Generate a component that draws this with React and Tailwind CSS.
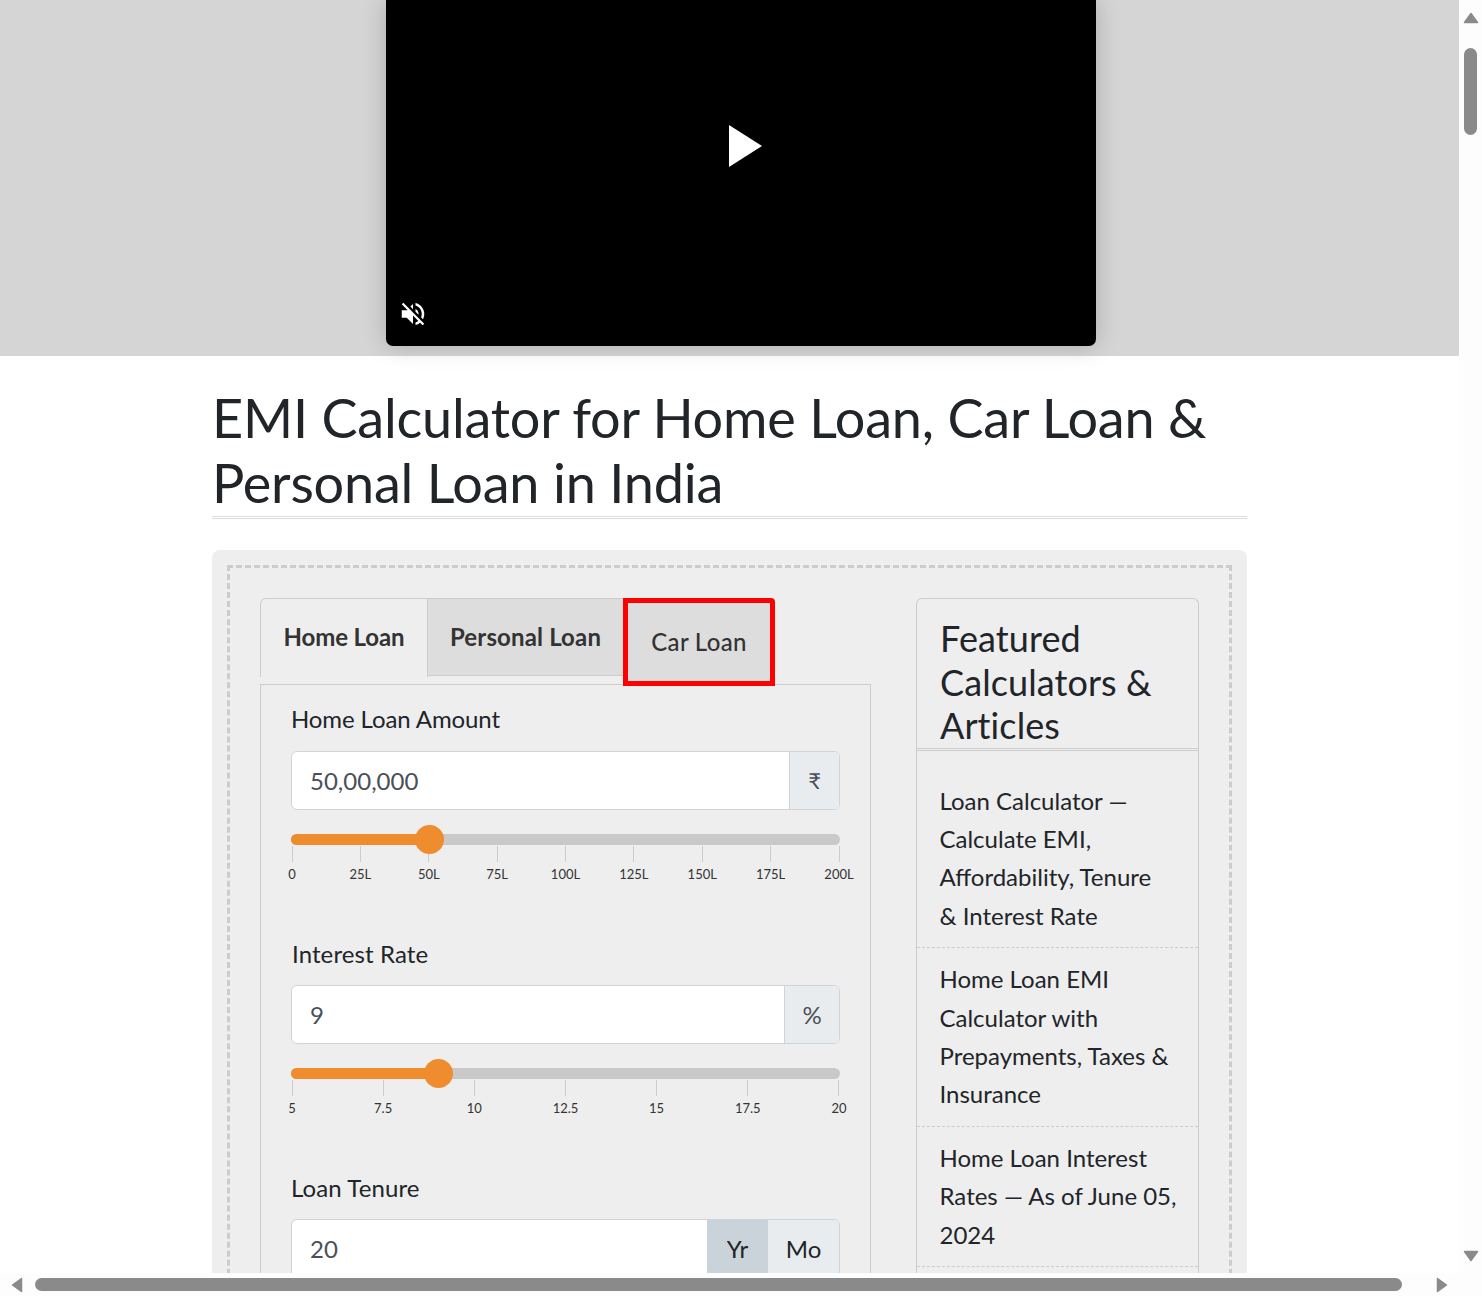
const Ticks = ({ labels }) => (
  <div className="mt-px flex justify-between px-px">
    {labels.map((l) => (
      <div key={l} className="flex w-0 flex-col items-center">
        <div className="h-[16px] w-px shrink-0 bg-[#ccc]" />
        <div className="mt-[2px] whitespace-nowrap text-[13px] leading-[20px] text-[#333]">{l}</div>
      </div>
    ))}
  </div>
);

const Slider = ({ pct, labels }) => (
  <div>
    <div className="relative h-[11px] rounded-full bg-[#c9c9c9]">
      <div className="h-full rounded-full bg-[#ee8c2e]" style={{ width: `${pct}%` }} />
      <div
        className="absolute top-[-9px] ml-[-15px] h-[29px] w-[29px] rounded-full bg-[#ee8c2e]"
        style={{ left: `${pct}%` }}
      />
    </div>
    <Ticks labels={labels} />
  </div>
);

const Field = ({ label, labelClass, value, children }) => (
  <div>
    <div className={`text-[24px] leading-[36px] text-[#212529] ${labelClass}`}>{label}</div>
    <div className="mt-[13px] flex h-[59px] overflow-hidden rounded-[6px] border border-[#ced4da] bg-white">
      <div className="flex flex-1 items-center pl-[18px] text-[24px] text-[#495057]">{value}</div>
      {children}
    </div>
  </div>
);

const ArrowV = ({ points, className }) => (
  <svg viewBox="0 0 16 12" className={`h-[12px] w-[16px] shrink-0 ${className}`}>
    <polygon points={points} fill="#8a8a8a" stroke="#8a8a8a" strokeWidth="1.5" strokeLinejoin="round" />
  </svg>
);

const ArrowH = ({ points, className }) => (
  <svg viewBox="0 0 12 16" className={`h-[16px] w-[12px] shrink-0 ${className}`}>
    <polygon points={points} fill="#8a8a8a" stroke="#8a8a8a" strokeWidth="1.5" strokeLinejoin="round" />
  </svg>
);

const articles = [
  ["Loan Calculator —", "Calculate EMI,", "Affordability, Tenure", "& Interest Rate"],
  ["Home Loan EMI", "Calculator with", "Prepayments, Taxes &", "Insurance"],
  ["Home Loan Interest", "Rates — As of June 05,", "2024"],
];

export default function App() {
  return (
    <div className="h-[1296px] w-[1482px] overflow-hidden bg-white font-['Lato',sans-serif] text-[#212529]">
      <div className="flex h-[1273px]">
        <div className="h-full w-[1459px] overflow-hidden">
          {/* video */}
          <div className="h-[356px] bg-[#d5d5d5] pb-[10px]">
            <div className="relative ml-[386px] h-[346px] w-[710px] rounded-b-[7px] bg-black shadow-[0_0_24px_rgba(0,0,0,0.2)]">
              <svg viewBox="0 0 33 42" className="absolute left-[343px] top-[125px] h-[42px] w-[33px]">
                <polygon points="0,0 33,21 0,42" fill="white" />
              </svg>
              <svg viewBox="0 0 24 24" className="absolute left-[12px] top-[299px] h-[30px] w-[30px]" fill="white">
                <path d="M16.5 12c0-1.77-1.02-3.29-2.5-4.03v2.21l2.45 2.45c.03-.2.05-.41.05-.63zm2.5 0c0 .94-.2 1.82-.54 2.64l1.51 1.51C20.63 14.91 21 13.5 21 12c0-4.28-2.99-7.86-7-8.77v2.06c2.89.86 5 3.54 5 6.71zM4.27 3L3 4.27 7.73 9H3v6h4l5 5v-6.73l4.25 4.25c-.67.52-1.42.93-2.25 1.18v2.06c1.38-.31 2.63-.95 3.69-1.81L19.73 21 21 19.73l-9-9L4.27 3zM12 4L9.91 6.09 12 8.18V4z" />
              </svg>
            </div>
          </div>

          <div className="ml-[212px] w-[1035px]">
            <h1 className="mt-[29px] border-b-[3px] border-double border-[#ddd] pb-[1px] text-[54px] leading-[65px] tracking-[-0.2px]">
              EMI Calculator for Home Loan, Car Loan &amp; Personal Loan in India
            </h1>

            <div className="mt-[31px] rounded-[8px] bg-[#eee] p-[15px]">
              <div className="flex h-[800px] gap-[45px] border-[3px] border-dashed border-[#ccc] px-[30px] pt-[30px]">
                {/* calculator */}
                <div className="w-[611px]">
                  <div className="flex h-[86px] items-start">
                    <div className="flex h-[79px] w-[168px] items-center justify-center rounded-tl-[6px] border-l border-r border-t border-[#ccc] pb-[2px] text-[24px] font-bold tracking-[-0.1px] text-[#333]">
                      Home Loan
                    </div>
                    <div className="flex h-[78px] w-[195px] items-center justify-center border-b border-t border-[#ccc] bg-[#ddd] text-[24px] font-bold tracking-[0.15px] text-[#333]">
                      Personal Loan
                    </div>
                    <div className="flex h-[88px] w-[152px] items-center justify-center rounded-tr-[4px] border-[5px] border-[#f00] bg-[#ddd] text-[24px] font-medium tracking-[0.3px] text-[#333]">
                      Car Loan
                    </div>
                  </div>
                  <div className="h-[600px] border-l border-r border-t border-[#ccc] px-[30px] pt-[16px]">
                    <Field label="Home Loan Amount" labelClass="pb-px tracking-[-0.1px]" value="50,00,000">
                      <div className="flex w-[50px] items-center justify-center border-l border-[#ced4da] bg-[#e9ecef] text-[22px] text-[#495057]">₹</div>
                    </Field>
                    <div className="mt-[24px]">
                      <Slider pct={25.3} labels={["0", "25L", "50L", "75L", "100L", "125L", "150L", "175L", "200L"]} />
                    </div>
                    <div className="mt-[52px]">
                      <Field label="Interest Rate" labelClass="pl-px tracking-[0.1px]" value="9">
                        <div className="flex w-[55px] items-center justify-center border-l border-[#ced4da] bg-[#e9ecef] text-[24px] text-[#495057]">%</div>
                      </Field>
                    </div>
                    <div className="mt-[24px]">
                      <Slider pct={26.9} labels={["5", "7.5", "10", "12.5", "15", "17.5", "20"]} />
                    </div>
                    <div className="mt-[52px]">
                      <Field label="Loan Tenure" labelClass="tracking-[0.1px]" value="20">
                        <div className="flex w-[61px] items-center justify-center bg-[#cbd3da] text-[24px]">Yr</div>
                        <div className="flex w-[71px] items-center justify-center bg-[#e9ecef] text-[24px]">Mo</div>
                      </Field>
                    </div>
                  </div>
                </div>

                {/* sidebar */}
                <div className="h-[760px] w-[283px] rounded-t-[6px] border-l border-r border-t border-[#ccc]">
                  <h2 className="border-b-[3px] border-double border-[#ccc] px-[23px] pt-[18px] text-[36px] leading-[43.5px] tracking-[0.1px]">
                    Featured Calculators &amp; Articles
                  </h2>
                  <div className="pt-[19px]">
                    {articles.map((lines) => (
                      <div key={lines[0]} className="border-b border-dashed border-[#ccc] px-[22.5px] py-[12px] text-[24px] leading-[38.4px]">
                        {lines.map((l) => (
                          <div key={l} className="whitespace-nowrap">{l}</div>
                        ))}
                      </div>
                    ))}
                  </div>
                </div>
              </div>
            </div>
          </div>
        </div>

        {/* vertical scrollbar */}
        <div className="flex h-full w-[23px] flex-col items-center bg-[#fdfdfd] pt-[12px]">
          <ArrowV points="8,1.5 14.5,10.5 1.5,10.5" />
          <div className="mt-[24px] h-[87px] w-[13px] rounded-full bg-[#8a8a8a]" />
          <div className="flex-1" />
          <ArrowV points="1.5,1.5 14.5,1.5 8,10.5" className="mb-[11px]" />
        </div>
      </div>

      {/* horizontal scrollbar */}
      <div className="flex h-[23px] items-center bg-[#fdfdfd]">
        <ArrowH points="10.5,1.5 10.5,14.5 1.5,8" className="ml-[11px]" />
        <div className="ml-[12px] h-[13px] w-[1367px] rounded-full bg-[#8a8a8a]" />
        <ArrowH points="1.5,1.5 10.5,8 1.5,14.5" className="ml-[34px]" />
      </div>
    </div>
  );
}
